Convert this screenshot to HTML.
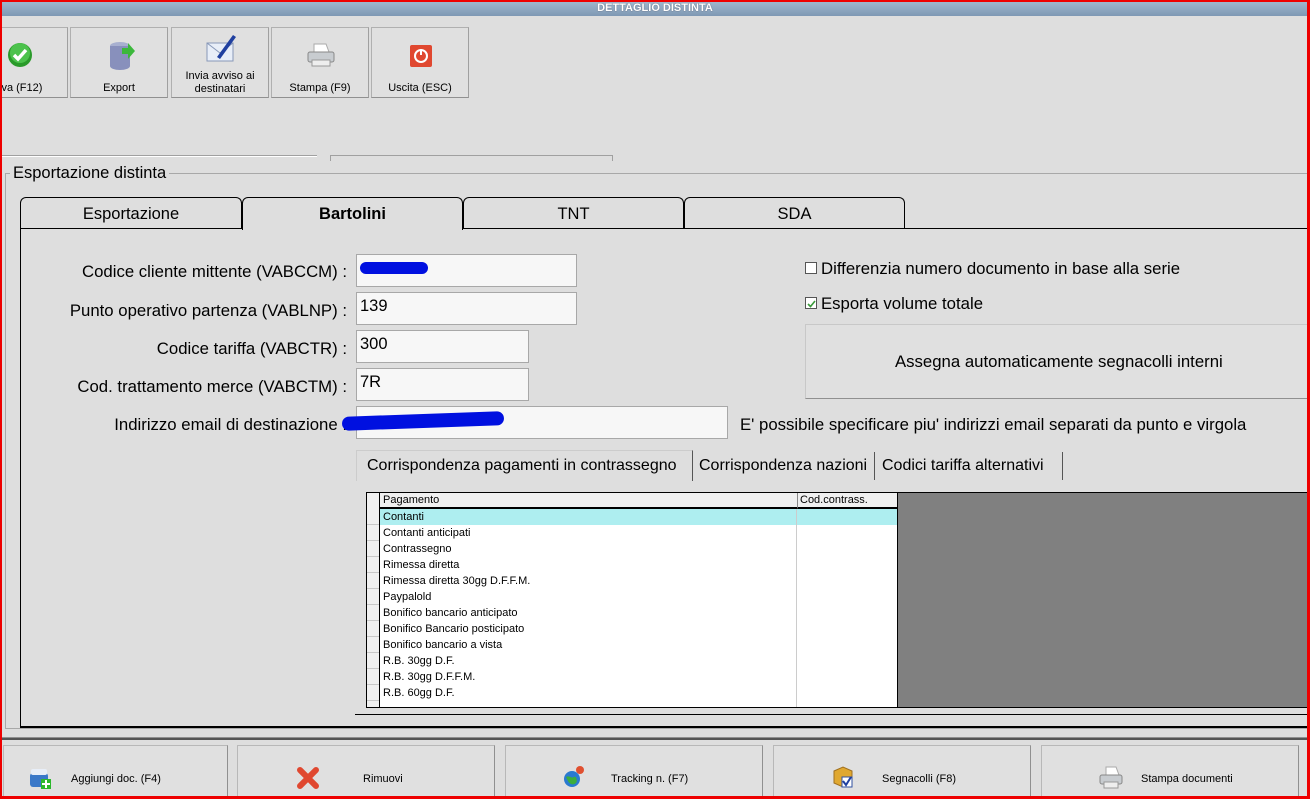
<!DOCTYPE html>
<html><head><meta charset="utf-8"><style>
*{margin:0;padding:0;box-sizing:border-box}
body{width:1310px;height:799px;position:relative;overflow:hidden;background:#dedede;font-family:"Liberation Sans",Tahoma,sans-serif;color:#000}
.a{position:absolute}
.tb{background:#e0e0e0;border:1px solid #b0b0b0;border-right-color:#a0a0a0;border-bottom-color:#909090;font-size:11px;text-align:center}
.tb span{position:absolute;left:0;right:0;line-height:13px}
.lbl{position:absolute;right:963px;font-size:16.75px;white-space:nowrap}
.inp{position:absolute;background:#f7f7f7;border:1px solid #a8a8a8;font-size:16.5px;padding:4px 0 0 3px}
.tab{position:absolute;top:197px;height:32px;border:1px solid #000;border-bottom:none;border-radius:6px 6px 0 0;font-size:16.5px;text-align:center;line-height:33px}
.row{position:absolute;left:367px;width:530px;height:16px;font-size:11px;line-height:16px;border-bottom:1px solid #c8c8c8}
.row .c1{position:absolute;left:12px;width:417px;height:16px;border-left:1px solid #000;padding-left:3px;background:#fff}
.row .c2{position:absolute;left:429px;width:101px;height:16px;border-left:1px solid #ccc;background:#fff}
.bb{position:absolute;top:745px;height:54px;background:#e0e0e0;border:1px solid #b8b8b8;border-right-color:#909090;font-size:11px}
.bb span{position:absolute;top:27px}
</style></head><body>
<div class="a" style="left:0;top:0;width:1310px;height:16px;background:linear-gradient(#9fb6cc,#7e98b4);border-top:2px solid #e00"></div>
<div class="a" style="left:0;top:2px;width:1310px;text-align:center;color:#fff;font-weight:bold;font-size:11px;text-shadow:0 0 1px #445">DETTAGLIO DISTINTA</div>
<div class="a tb" style="left:-10px;top:27px;width:78px;height:71px"><svg class="a" style="left:16px;top:14px" width="26" height="26"><circle cx="13" cy="13" r="12" fill="#2a9a2a"/><circle cx="13" cy="11" r="10" fill="#4cc24c"/><path d="M7 13l4 4 8-9" stroke="#fff" stroke-width="3.5" fill="none"/></svg><span style="top:54px;left:8px;text-align:left">lva (F12)</span></div>
<div class="a tb" style="left:70px;top:27px;width:98px;height:71px"><svg class="a" style="left:37px;top:12px" width="28" height="30"><ellipse cx="12" cy="6" rx="10" ry="4" fill="#a8b0d0"/><rect x="2" y="6" width="20" height="20" fill="#8890bc"/><ellipse cx="12" cy="26" rx="10" ry="4" fill="#8890bc"/><path d="M14 8h6v-5l7 8-7 8v-5h-6z" fill="#3cb83c"/></svg><span style="top:54px">Export</span></div>
<div class="a tb" style="left:171px;top:27px;width:98px;height:71px"><svg class="a" style="left:33px;top:5px" width="32" height="30"><rect x="2" y="10" width="26" height="18" fill="#e8eef8" stroke="#8898b8"/><path d="M2 10l13 10 13-10" stroke="#8898b8" fill="none"/><path d="M12 24L28 2l3 2-16 22z" fill="#2040a0"/></svg><span style="top:42px">Invia avviso ai<br>destinatari</span></div>
<div class="a tb" style="left:271px;top:27px;width:98px;height:71px"><svg class="a" style="left:34px;top:14px" width="30" height="26"><path d="M8 2h12l3 8H8z" fill="#fff" stroke="#aaa"/><rect x="2" y="10" width="26" height="10" rx="2" fill="#c8ccd0" stroke="#888"/><rect x="6" y="18" width="18" height="6" fill="#eee" stroke="#999"/></svg><span style="top:54px">Stampa (F9)</span></div>
<div class="a tb" style="left:371px;top:27px;width:98px;height:71px"><svg class="a" style="left:37px;top:16px" width="24" height="24"><rect x="1" y="1" width="22" height="22" rx="2" fill="#e04830"/><circle cx="12" cy="12" r="6" stroke="#fff" stroke-width="2" fill="none"/><path d="M12 5v6" stroke="#fff" stroke-width="2"/></svg><span style="top:54px">Uscita (ESC)</span></div>
<div class="a" style="left:0;top:155px;width:317px;height:2px;border-top:1px solid #a0a0a0;border-bottom:1px solid #fff"></div>
<div class="a" style="left:330px;top:155px;width:283px;height:6px;border:1px solid #a0a0a0;border-bottom:none"></div>
<div class="a" style="left:5px;top:173px;width:1310px;height:556px;border:1px solid #a8a8a8"></div>
<div class="a" style="left:10px;top:164px;background:#dedede;padding:0 3px;font-size:16.5px">Esportazione distinta</div>
<div class="a" style="left:20px;top:228px;width:1295px;height:500px;border-left:1px solid #000;border-top:1px solid #000;border-bottom:2px solid #000"></div>
<div class="tab" style="left:20px;width:222px">Esportazione</div>
<div class="tab" style="left:242px;width:221px;background:#dedede;height:33px;font-weight:bold">Bartolini</div>
<div class="tab" style="left:463px;width:221px">TNT</div>
<div class="tab" style="left:684px;width:221px">SDA</div>
<div class="lbl" style="top:262px">Codice cliente mittente (VABCCM) :</div>
<div class="lbl" style="top:301px">Punto operativo partenza (VABLNP) :</div>
<div class="lbl" style="top:339px">Codice tariffa (VABCTR) :</div>
<div class="lbl" style="top:377px">Cod. trattamento merce (VABCTM) :</div>
<div class="lbl" style="top:415px">Indirizzo email di destinazione :</div>
<div class="inp" style="left:356px;top:254px;width:221px;height:33px"></div>
<div class="inp" style="left:356px;top:292px;width:221px;height:33px">139</div>
<div class="inp" style="left:356px;top:330px;width:173px;height:33px">300</div>
<div class="inp" style="left:356px;top:368px;width:173px;height:33px">7R</div>
<div class="inp" style="left:356px;top:406px;width:372px;height:33px"></div>
<div class="a" style="left:360px;top:262px;width:68px;height:12px;border-radius:6px;background:#0010e0"></div>
<div class="a" style="left:342px;top:414px;width:162px;height:14px;border-radius:7px;background:#0010e0;transform:rotate(-2deg)"></div>
<div class="a" style="left:740px;top:415px;font-size:16.75px">E' possibile specificare piu' indirizzi email separati da punto e virgola</div>
<div class="a" style="left:805px;top:262px;width:12px;height:12px;border:1px solid #555;background:#fff"></div>
<div class="a" style="left:821px;top:259px;font-size:16.75px">Differenzia numero documento in base alla serie</div>
<div class="a" style="left:805px;top:297px;width:12px;height:12px;border:1px solid #555;background:#fff"><svg class="a" style="left:1px;top:1px" width="9" height="9"><path d="M1 5l2.5 2.5L8 2" stroke="#3a9a3a" stroke-width="1.6" fill="none"/></svg></div>
<div class="a" style="left:821px;top:294px;font-size:16.75px">Esporta volume totale</div>
<div class="a" style="left:805px;top:324px;width:510px;height:75px;background:#e0e0e0;border:1px solid #c8c8c8;border-bottom-color:#909090;font-size:16.75px;line-height:73px;padding-left:89px">Assegna automaticamente segnacolli interni</div>
<div class="a" style="left:356px;top:450px;width:337px;height:31px;border:1px solid #ccc;border-right:1px solid #555;border-bottom:none;font-size:16px;padding:6px 0 0 10px;white-space:nowrap">Corrispondenza pagamenti in contrassegno</div>
<div class="a" style="left:693px;top:452px;width:182px;height:28px;border-right:1px solid #555;font-size:16px;padding:5px 0 0 6px;white-space:nowrap">Corrispondenza nazioni</div>
<div class="a" style="left:875px;top:452px;width:188px;height:28px;border-right:1px solid #555;font-size:16px;padding:5px 0 0 7px;white-space:nowrap">Codici tariffa alternativi</div>
<div class="a" style="left:355px;top:714px;width:960px;height:1px;background:#000"></div>
<div class="a" style="left:366px;top:492px;width:950px;height:216px;border:1px solid #000;background:#808080;overflow:hidden">
<div class="a" style="left:0;top:0;width:530px;height:215px;background:#f0f0f0"></div>
<div class="a" style="left:12px;top:0;width:418px;height:16px;border-left:1px solid #000;border-bottom:2px solid #000;font-size:11px;line-height:15px;padding-left:3px;background:#f0f0f0">Pagamento</div>
<div class="a" style="left:430px;top:0;width:100px;height:16px;border-left:1px solid #888;border-bottom:2px solid #000;font-size:11px;line-height:15px;padding-left:2px;background:#f0f0f0">Cod.contrass.</div>
<div class="a" style="left:530px;top:0;width:1px;height:216px;background:#000"></div>
</div>
<div class="row" style="top:509px"><div class="c1" style="background:#aeeef0">Contanti</div><div class="c2" style="background:#aeeef0"></div></div>
<div class="row" style="top:525px"><div class="c1">Contanti anticipati</div><div class="c2"></div></div>
<div class="row" style="top:541px"><div class="c1">Contrassegno</div><div class="c2"></div></div>
<div class="row" style="top:557px"><div class="c1">Rimessa diretta</div><div class="c2"></div></div>
<div class="row" style="top:573px"><div class="c1">Rimessa diretta 30gg D.F.F.M.</div><div class="c2"></div></div>
<div class="row" style="top:589px"><div class="c1">Paypalold</div><div class="c2"></div></div>
<div class="row" style="top:605px"><div class="c1">Bonifico bancario anticipato</div><div class="c2"></div></div>
<div class="row" style="top:621px"><div class="c1">Bonifico Bancario posticipato</div><div class="c2"></div></div>
<div class="row" style="top:637px"><div class="c1">Bonifico bancario a vista</div><div class="c2"></div></div>
<div class="row" style="top:653px"><div class="c1">R.B. 30gg D.F.</div><div class="c2"></div></div>
<div class="row" style="top:669px"><div class="c1">R.B. 30gg D.F.F.M.</div><div class="c2"></div></div>
<div class="row" style="top:685px"><div class="c1">R.B. 60gg D.F.</div><div class="c2"></div></div>
<div class="row" style="top:701px;height:6px;overflow:hidden;border:none"><div class="c1" style="height:6px"></div><div class="c2" style="height:6px"></div></div>
<div class="a" style="left:0;top:737px;width:1310px;height:3px;border-top:1px solid #909090;border-bottom:2px solid #555"></div>
<div class="bb" style="left:3px;width:225px"><svg class="a" style="left:24px;top:21px" width="24" height="22"><rect x="2" y="6" width="18" height="14" rx="3" fill="#3a78c8"/><rect x="3" y="2" width="16" height="6" rx="2" fill="#e8eef8"/><rect x="13" y="12" width="10" height="10" fill="#2cb82c"/><path d="M18 13v8M14 17h8" stroke="#fff" stroke-width="2"/></svg><span style="left:67px">Aggiungi doc. (F4)</span></div>
<div class="bb" style="left:237px;width:258px"><svg class="a" style="left:59px;top:21px" width="22" height="22"><path d="M3 3l16 16M19 3L3 19" stroke="#e04830" stroke-width="6" stroke-linecap="round"/></svg><span style="left:125px">Rimuovi</span></div>
<div class="bb" style="left:505px;width:258px"><svg class="a" style="left:56px;top:19px" width="24" height="24"><circle cx="10" cy="14" r="8" fill="#2a7ad0"/><path d="M4 12c3-2 6 2 8 0s4 4 2 6-6 2-8-2z" fill="#3cae3c"/><circle cx="18" cy="5" r="4" fill="#e05030"/></svg><span style="left:105px">Tracking n. (F7)</span></div>
<div class="bb" style="left:773px;width:258px"><svg class="a" style="left:57px;top:19px" width="24" height="24"><path d="M3 6l9-4 9 4v12l-9 4-9-4z" fill="#e0a830" stroke="#a07020"/><rect x="11" y="12" width="10" height="10" fill="#fff" stroke="#3050a0"/><path d="M12 16l3 4 5-8" stroke="#2040a0" stroke-width="2" fill="none"/></svg><span style="left:108px">Segnacolli (F8)</span></div>
<div class="bb" style="left:1041px;width:258px"><svg class="a" style="left:56px;top:19px" width="26" height="24"><path d="M8 2h10l3 8H8z" fill="#fff" stroke="#aaa"/><rect x="2" y="10" width="22" height="9" rx="2" fill="#c8ccd0" stroke="#888"/><rect x="6" y="17" width="14" height="6" fill="#eee" stroke="#999"/></svg><span style="left:99px">Stampa documenti</span></div>
<div class="a" style="left:0;top:0;width:2px;height:799px;background:#e00"></div>
<div class="a" style="left:1307px;top:0;width:3px;height:799px;background:#e00"></div>
<div class="a" style="left:0;top:796px;width:1310px;height:3px;background:#e00"></div>
</body></html>
